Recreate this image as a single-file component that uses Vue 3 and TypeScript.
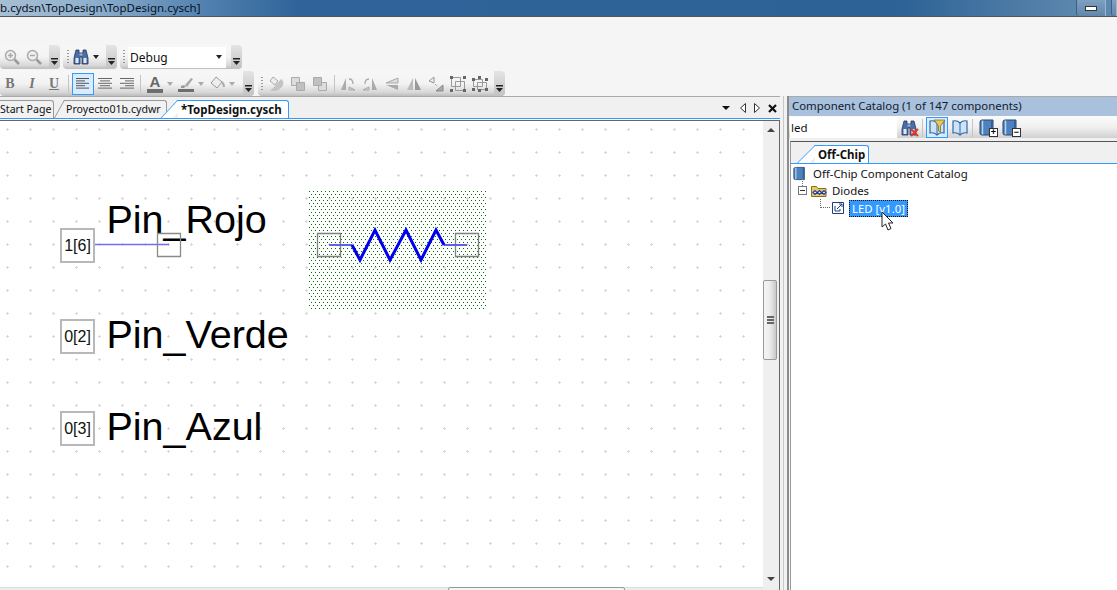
<script setup lang="ts">
const pins = [
  { id: 'rojo', value: '1[6]', label: 'Pin_Rojo' },
  { id: 'verde', value: '0[2]', label: 'Pin_Verde' },
  { id: 'azul', value: '0[3]', label: 'Pin_Azul' }
];

const alignLines = {
  left: [[1, 13], [1, 9], [1, 13], [1, 9], [1, 13]],
  center: [[1, 14], [3, 10], [1, 14], [3, 10], [1, 14]],
  right: [[1, 14], [6, 9], [1, 14], [6, 9], [1, 14]]
};
</script>

<template>
  <div class="window">
    <svg class="defs" width="0" height="0">
      <defs>
        <symbol id="binoc" viewBox="0 0 16 16">
          <path d="M3 1h3v3h4V1h3l2 8v6H9V8H7v7H1V9z" fill="#4a6ea8" stroke="#22365e" stroke-width=".8" />
          <path d="M2.500 9h3v5h-3zM10.500 9h3v5h-3z" fill="#dfe8f6" />
          <path d="M6.500 4.500h3v2h-3z" fill="#9fb4d6" />
        </symbol>
        <symbol id="book" viewBox="0 0 16 17">
          <path d="M3 1h11v15H3a2 2 0 0 1-2-2V3a2 2 0 0 1 2-2z" fill="#4f81bd" stroke="#26466f" />
          <path d="M3.500 1.500v14" stroke="#b9d2ee" stroke-width="1.500" />
          <path d="M12 2h1.500v13H12z" fill="#2f5f97" />
        </symbol>
        <symbol id="openbook" viewBox="0 0 18 17">
          <path d="M9 4C7 2 4 1.500 2 2v12c2-.5 5 0 7 2 2-2 5-2.500 7-2V2c-2-.5-5 0-7 2z" fill="#cfe2f6" stroke="#2f6aa8" stroke-width="1.200" />
          <path d="M9 4v12" stroke="#2f6aa8" />
        </symbol>
        <symbol id="grip" viewBox="0 0 7 8">
          <path d="M0 0h7v1.500H0z" fill="#222" />
          <path d="M0 3h7L3.500 7z" fill="#222" />
        </symbol>
      </defs>
    </svg>

    <div class="titlebar">
      <span class="title-text">b.cydsn\TopDesign\TopDesign.cysch]</span>
      <div class="winbtns">
        <span class="winbtn"><i></i></span>
        <span class="winbtn winbtn-next"></span>
      </div>
    </div>

    <div class="commands">
      <div class="row row-one">
        <div class="strip s-zoom">
          <svg class="ico16 m4" viewBox="0 0 16 16"><circle cx="6.500" cy="6.500" r="5" fill="#eee" stroke="#aaa" stroke-width="1.500" /><path d="M10.500 10.500l4.500 4.500" stroke="#999" stroke-width="2.500" /><path d="M4 6.500h5M6.500 4v5" stroke="#aaa" stroke-width="1.400" /></svg>
          <svg class="ico16 m7" viewBox="0 0 16 16"><circle cx="6.500" cy="6.500" r="5" fill="#eee" stroke="#aaa" stroke-width="1.500" /><path d="M10.500 10.500l4.500 4.500" stroke="#999" stroke-width="2.500" /><path d="M4 6.500h5" stroke="#aaa" stroke-width="1.400" /></svg>
          <span class="over"><svg class="gripico"><use href="#grip" /></svg></span>
        </div>
        <div class="strip s-find">
          <span class="dots"></span>
          <svg class="ico16 m3"><use href="#binoc" /></svg>
          <span class="caret c5"></span>
          <span class="over"><svg class="gripico"><use href="#grip" /></svg></span>
        </div>
        <div class="strip s-config">
          <span class="dots"></span>
          <div class="select"><span>Debug</span><span class="caret"></span></div>
          <span class="over"><svg class="gripico"><use href="#grip" /></svg></span>
        </div>
      </div>

      <div class="row row-two">
        <div class="strip s-format">
          <span class="fmt f-b">B</span>
          <span class="fmt f-i">I</span>
          <span class="fmt f-u">U</span>
          <span class="sep sep-a"></span>
          <span class="align on">
            <svg viewBox="0 0 16 11" width="16" height="11"><path v-for="(l, i) in alignLines.left" :key="i" :d="`M${l[0]} ${i * 2.4 + .5}h${l[1]}`" stroke="#555" /></svg>
          </span>
          <span class="align">
            <svg viewBox="0 0 16 11" width="16" height="11"><path v-for="(l, i) in alignLines.center" :key="i" :d="`M${l[0]} ${i * 2.4 + .5}h${l[1]}`" stroke="#666" /></svg>
          </span>
          <span class="align">
            <svg viewBox="0 0 16 11" width="16" height="11"><path v-for="(l, i) in alignLines.right" :key="i" :d="`M${l[0]} ${i * 2.4 + .5}h${l[1]}`" stroke="#666" /></svg>
          </span>
          <span class="sep sep-b"></span>
          <span class="color-a">A</span>
          <span class="caret gray c4"></span>
          <svg class="ico16 m5" viewBox="0 0 16 16"><path d="M7 9l6-7 2 1-6 8z" fill="#aaa" /><path d="M3 10c2-1 3-1 5 0l-2 2H3z" fill="#999" /><path d="M0 13h16v3H0z" fill="#6d6d6d" /></svg>
          <span class="caret gray c4"></span>
          <svg class="ico16 m5" viewBox="0 0 16 16"><path d="M7 1l6 5-5 6-6-5z" fill="#eee" stroke="#999" /><path d="M13 6c2 2 2 3 2 5" stroke="#aaa" stroke-width="2" fill="none" /><path d="M0 13h16v3H0z" fill="#ddd" /></svg>
          <span class="caret gray c4"></span>
          <span class="over"><svg class="gripico"><use href="#grip" /></svg></span>
        </div>
        <div class="strip s-arrange">
          <span class="dots"></span>
          <svg class="ico16 ar1" viewBox="0 0 18 16"><path d="M5 1l5 4-3 4-5-4z" fill="#eee" stroke="#aaa" /><path d="M13 3c3 2 3 5 1 8l-5 4H2l5-5z" fill="#c4c4c4" /></svg>
          <svg class="ico16 ar2" viewBox="0 0 16 16"><path d="M1.500 1.500h8v8h-8z" fill="#ddd" stroke="#aaa" /><path d="M6.500 6.500h8v8h-8z" fill="#c0c0c0" stroke="#aaa" /></svg>
          <svg class="ico16 ar6" viewBox="0 0 16 16"><path d="M6.500 6.500h8v8h-8z" fill="#ddd" stroke="#aaa" /><path d="M1.500 1.500h8v8h-8z" fill="#c0c0c0" stroke="#aaa" /></svg>
          <span class="sep sep-c"></span>
          <svg class="ico16 ar3" viewBox="0 0 16 16"><path d="M1 14L6 2v12z" fill="#aaa" /><path d="M9 14v-3l6 3z" fill="#ccc" stroke="#aaa" /><path d="M9 3c3 0 4 2 4 5" fill="none" stroke="#aaa" stroke-width="1.300" /></svg>
          <svg class="ico16 ar6" viewBox="0 0 16 16"><path d="M15 14L10 2v12z" fill="#aaa" /><path d="M7 14v-3l-6 3z" fill="#ccc" stroke="#aaa" /><path d="M7 3C4 3 3 5 3 8" fill="none" stroke="#aaa" stroke-width="1.300" /></svg>
          <svg class="ico16 ar6" viewBox="0 0 16 16"><path d="M2 7l12-5v5z" fill="#ddd" stroke="#aaa" /><path d="M2 9l12 5V9z" fill="#aaa" /></svg>
          <svg class="ico16 ar6" viewBox="0 0 16 16"><path d="M7 2L1 14h6z" fill="#bbb" /><path d="M9 2l6 12H9z" fill="#999" /></svg>
          <svg class="ico16 ar6" viewBox="0 0 16 16"><path d="M1 5l5-4v6z" fill="#eee" stroke="#999" /><path d="M15 15H8l7-6z" fill="#aaa" stroke="#888" /><path d="M7 8l2 2" stroke="#888" stroke-dasharray="1 1" /></svg>
          <svg class="ico16 ar6" viewBox="0 0 16 16"><path d="M1.500 1.500h9v9h-9zM5.500 5.500h9v9h-9z" fill="none" stroke="#999" /><path d="M0 0h3v3H0zM13 0h3v3h-3zM0 13h3v3H0zM13 13h3v3h-3z" fill="#666" /></svg>
          <svg class="ico16 ar6" viewBox="0 0 16 16"><path d="M1.500 3.500h9v7h-9zM5.500 6.500h9v7h-9z" fill="none" stroke="#999" /><path d="M0 2h3v3H0zM13 2h3v3h-3zM0 12h3v3H0zM13 12h3v3h-3zM6 0h3v3H6zM6 13h3v3H6z" fill="#666" /></svg>
          <span class="over"><svg class="gripico"><use href="#grip" /></svg></span>
        </div>
      </div>
    </div>

    <div class="workspace">
      <section class="doc">
        <div class="tabbar">
          <span class="tab tab-start">Start Page</span>
          <span class="tab tab-proj">Proyecto01b.cydwr</span>
          <span class="tab tab-top">*TopDesign.cysch</span>
          <div class="tab-tools">
            <span class="tt-down"></span>
            <svg width="6" height="10" viewBox="0 0 6 10"><path d="M5.500 .5v9L.5 5z" fill="#fff" stroke="#333" /></svg>
            <svg width="6" height="10" viewBox="0 0 6 10"><path d="M.5 .5v9L5.500 5z" fill="#fff" stroke="#333" /></svg>
            <svg viewBox="0 0 9 9" width="9" height="9"><path d="M1 1l7 7M8 1L1 8" stroke="#111" stroke-width="2.200" /></svg>
          </div>
        </div>

        <div class="doc-body">
          <div class="canvas-col">
            <div class="canvas">
              <div class="pins">
                <div v-for="pin in pins" :key="pin.id" class="pin" :class="pin.id">
                  <span class="pin-box">{{ pin.value }}</span>
                  <span class="pin-label">{{ pin.label }}</span>
                </div>
              </div>

              <!-- wire + loose terminal on Pin_Rojo -->
              <svg class="wire" width="100" height="40" viewBox="0 0 100 40">
                <path d="M0 13.500h74" stroke="#6f6ff0" stroke-width="1.500" />
                <path d="M62.500 2.500h23v23h-23z" fill="none" stroke="#8a8a8a" stroke-width="1.300" />
              </svg>

              <!-- resistor, selected -->
              <svg class="resistor" width="178" height="118" viewBox="0 0 178 118">
                <defs>
                  <pattern id="hatch" width="4" height="6" patternUnits="userSpaceOnUse">
                    <rect x="0" y="0" width="1" height="1" fill="#006c00" />
                    <rect x="2" y="3" width="1" height="1" fill="#006c00" />
                  </pattern>
                </defs>
                <rect width="178" height="118" fill="url(#hatch)" />
                <path d="M8.500 42.500h23v23h-23zM146.500 42.500h23v23h-23z" fill="none" stroke="#808080" stroke-width="1.300" />
                <path d="M20 54h23M135 54h23" stroke="#6060e8" stroke-width="2" />
                <path d="M43 54l8 15 15-30 15 30 16-30 15 30 15-30 8 15" fill="none" stroke="#0000ee" stroke-width="3" />
              </svg>
            </div>
            <div class="hbar"><span class="hthumb"></span></div>
          </div>
          <div class="vbar">
            <span class="arrow-up"></span>
            <span class="vthumb"><i></i><i></i><i></i></span>
            <span class="arrow-down"></span>
          </div>
        </div>
      </section>

      <div class="splitter"></div>

      <aside class="catalog">
        <header class="cat-head">Component Catalog (1 of 147 components)</header>
        <div class="cat-tools">
          <div class="cat-search">led</div>
          <span class="cat-binoc">
            <svg class="ico16"><use href="#binoc" /></svg>
            <svg class="redx" viewBox="0 0 9 9" width="9" height="9"><path d="M1 1l7 7M8 1L1 8" stroke="#e0392b" stroke-width="2" /></svg>
          </span>
          <span class="sep sep-d"></span>
          <span class="filter-btn">
            <svg width="18" height="17" viewBox="0 0 18 17"><use href="#openbook" /><path d="M6 1h11l-4.500 6v6l-2-1V7z" fill="#e8c65a" stroke="#7a6420" stroke-width=".7" /></svg>
          </span>
          <svg class="ico-book" width="18" height="17"><use href="#openbook" /></svg>
          <span class="sep sep-e"></span>
          <span class="book-op">
            <svg width="16" height="17"><use href="#book" /></svg>
            <b class="op">+</b>
          </span>
          <span class="book-op">
            <svg width="16" height="17"><use href="#book" /></svg>
            <b class="op">−</b>
          </span>
        </div>
        <div class="cat-body">
          <div class="cat-tabs"><span class="cat-tab">Off-Chip</span></div>
          <div class="tree">
            <div class="node n-root">
              <svg width="13" height="15"><use href="#book" /></svg>
              <span>Off-Chip Component Catalog</span>
            </div>
            <div class="node n-folder">
              <span class="expander"></span>
              <svg width="16" height="12" viewBox="0 0 16 12"><path d="M.5 1.500h5l1.500 2h8v8H.5z" fill="#e8c766" stroke="#8a6d1e" /><path d="M2 7.500l2-2 2 2-2 2zM6.500 7.500l2-2 2 2-2 2zM11 7.500l2-2 2 2-2 2z" fill="#fff" stroke="#1f3f9e" stroke-width="1.200" /></svg>
              <span>Diodes</span>
            </div>
            <div class="node n-leaf">
              <span class="branch"></span>
              <svg width="12" height="12" viewBox="0 0 12 12"><path d="M.5.500h11v11H.5z" fill="#fff" stroke="#1f3f78" /><path d="M3 4v5h5V7" fill="none" stroke="#1f3f78" /><path d="M5 7l5-5M7 2h3v3" fill="none" stroke="#1f3f78" /></svg>
              <span class="leaf-label">LED [v1.0]</span>
            </div>
          </div>
          <svg class="cursor" width="14" height="20" viewBox="0 0 14 20"><path d="M1 1v15l3.500-3 2.500 6 3-1.500-2.500-5.500H12z" fill="#fff" stroke="#222" /></svg>
        </div>
      </aside>
    </div>
  </div>
</template>

<style scoped>
.window {
  width: 1117px;
  height: 590px;
  overflow: hidden;
  display: flex;
  flex-direction: column;
  background: #f5f5f5;
  font-family: "Noto Sans", "Liberation Sans", sans-serif;
  font-size: 11.5px;
  color: #111;
}
.defs { position: absolute; }

.titlebar {
  height: 17px;
  flex: none;
  box-sizing: border-box;
  display: flex;
  align-items: center;
  justify-content: space-between;
  border-bottom: 1px solid #555;
  background: linear-gradient(90deg, #a8bfd4 0, #8fb0cd 90px, #4f7fae 210px, #2f6399 300px, #2d6296 900px, #5d88ae 1080px);
}
.title-text { font-size: 11.500px; color: #06121f; line-height: 16px; }
.winbtns { display: flex; align-items: stretch; height: 16px; }
.winbtn {
  width: 28px;
  margin-right: 5px;
  display: flex;
  align-items: center;
  justify-content: center;
  background: linear-gradient(#7ea0c0, #5f87ad);
  border-left: 1px solid #3d5f82;
  border-right: 1px solid #9db7cf;
  border-radius: 0 0 0 3px;
}
.winbtn i { width: 10px; height: 3px; background: #fff; border: 1px solid #333; }
.winbtn-next { width: 4px; margin-right: 0; }

.commands {
  height: 79px;
  flex: none;
  padding-top: 28px;
  box-sizing: border-box;
  display: flex;
  flex-direction: column;
  gap: 2px;
}
.row { display: flex; height: 24px; }
.row-two { height: 25px; }
.strip {
  display: flex;
  align-items: center;
  height: 100%;
  position: relative;
  box-sizing: border-box;
  border-radius: 4px;
  background: linear-gradient(#f7f7f7 0, #f3f3f3 50%, #d8d8d8 85%, #bdbdbd 100%);
}
.s-zoom { width: 60px; margin-right: 3px; }
.s-find { width: 54px; margin-right: 3px; padding-left: 4px; }
.s-config { width: 122px; padding-left: 3px; }
.s-format { width: 254px; margin-right: 4px; }
.s-arrange { width: 247px; padding-left: 3px; }
.over {
  position: absolute;
  right: 0;
  top: 0;
  bottom: 0;
  width: 11px;
  border-radius: 0 4px 4px 0;
  background: linear-gradient(#e4e4e4, #c2c2c2);
}
.gripico { position: absolute; left: 2px; bottom: 3px; width: 7px; height: 8px; }
.dots {
  width: 2px;
  height: 14px;
  flex: none;
  background: repeating-linear-gradient(#999 0 1px, transparent 1px 3px);
}
.ico16 { width: 16px; height: 16px; flex: none; }
.m4 { margin-left: 4px; }
.m7 { margin-left: 6px; }
.m3 { margin-left: 4px; }
.m5 { margin-left: 5px; }
.caret {
  width: 0;
  height: 0;
  flex: none;
  border: 3.500px solid transparent;
  border-top: 4px solid #222;
  border-bottom: 0;
}
.caret.gray { border-top-color: #aaa; }
.c5 { margin-left: 4px; }
.c4 { margin-left: 4px; }
.select {
  width: 98px;
  height: 21px;
  margin-left: 3px;
  padding: 0 4px 0 2px;
  box-sizing: border-box;
  display: flex;
  align-items: center;
  justify-content: space-between;
  background: #fff;
  font-size: 12px;
}

.fmt {
  width: 12px;
  flex: none;
  text-align: center;
  font-family: "Liberation Serif", serif;
  font-size: 14px;
  font-weight: bold;
  color: #777;
}
.f-b { margin-left: 4px; }
.f-i { margin-left: 10px; font-style: italic; }
.f-u { margin-left: 10px; text-decoration: underline; }
.sep { width: 1px; height: 18px; flex: none; background: #c4c4c4; }
.sep-a { margin-left: 8px; }
.sep-b { margin-left: 2px; }
.sep-c { margin-left: 6px; }
.align {
  width: 22px;
  height: 22px;
  flex: none;
  box-sizing: border-box;
  display: flex;
  align-items: center;
  justify-content: center;
}
.sep-a + .align { margin-left: 3px; }
.align.on { background: #d9ecfd; border: 1px solid #3399ff; }
.color-a {
  width: 16px;
  margin-left: 6px;
  flex: none;
  height: 18px;
  line-height: 14px;
  box-sizing: border-box;
  text-align: center;
  font-family: "Liberation Sans", sans-serif;
  font-size: 15px;
  font-weight: bold;
  color: #666;
  border-bottom: 4px solid #6d6d6d;
}
.ar1 { width: 18px; margin-left: 5px; }
.ar2 { margin-left: 4px; }
.ar3 { margin-left: 5px; }
.ar6 { margin-left: 6px; }

.workspace { flex: 1; display: flex; min-height: 0; }
.doc { width: 780px; flex: none; display: flex; flex-direction: column; border-top: 1px solid #aaa; }

.tabbar {
  height: 22px;
  flex: none;
  display: flex;
  align-items: flex-end;
  box-sizing: border-box;
  border-bottom: 1px solid #3399ff;
  position: relative;
  background: #f0f0f0;
  margin-bottom: 1px;
}
.tab {
  position: relative;
  isolation: isolate;
  height: 18px;
  line-height: 17px;
  box-sizing: border-box;
  background: #f2f2f2;
  border: 1px solid #999;
  border-left: 0;
  border-bottom: 0;
  border-radius: 0 3px 0 0;
  font-size: 10.600px;
  white-space: nowrap;
}
.tab-start { width: 54px; text-align: right; padding-right: 6px; }
.tab-proj { width: 103px; margin-left: 10px; padding-left: 2px; }
.tab-top {
  width: 111px;
  margin-left: 11px;
  padding-left: 3px;
  background: #fff;
  font-size: 11.500px;
  font-weight: bold;
  border-color: #3399ff;
}
.tab-proj::before, .tab-top::before {
  content: "";
  position: absolute;
  top: -1px;
  bottom: 0;
  background: inherit;
  border-left: 1px solid #999;
  border-top: 1px solid #999;
  box-sizing: border-box;
  z-index: -1;
}
.tab-proj::before { left: -5px; width: 8px; transform: skewX(-29deg); }
.tab-top::before { left: -9px; width: 12px; transform: skewX(-43deg); border-color: #3399ff; }
.tab-tools {
  position: absolute;
  right: 3px;
  top: 6px;
  display: flex;
  align-items: center;
  gap: 8px;
}
.tt-down { width: 0; height: 0; margin-right: 2px; border: 4px solid transparent; border-top: 4px solid #111; border-bottom: 0; }

.doc-body { flex: 1; display: flex; min-height: 0; border-top: 1px solid #666; }
.canvas-col { flex: 1; display: flex; flex-direction: column; min-width: 0; }
.canvas {
  flex: 1;
  position: relative;
  overflow: hidden;
  background-color: #fff;
  background-image: radial-gradient(circle, #d8d8d8 0, #d8d8d8 1px, transparent 1.300px);
  background-size: 23px 23px;
  background-position: -4px -3px;
}
.hbar { height: 3px; flex: none; box-sizing: border-box; background: #ececec; position: relative; border-top: 1px solid #ddd; }
.hthumb {
  position: absolute;
  left: 448px;
  top: -1px;
  width: 177px;
  height: 5px;
  box-sizing: border-box;
  background: #f5f5f5;
  border: 1px solid #999;
  border-radius: 2px 2px 0 0;
}
.vbar {
  width: 16px;
  flex: none;
  position: relative;
  background: #efefef;
  border-right: 1px solid #666;
  box-sizing: content-box;
}
.arrow-up, .arrow-down { position: absolute; left: 4px; width: 0; height: 0; border: 4px solid transparent; }
.arrow-up { top: 7px; border-bottom: 4px solid #444; border-top: 0; }
.arrow-down { bottom: 9px; border-top: 4px solid #444; border-bottom: 0; }
.vthumb {
  position: absolute;
  left: 0;
  top: 159px;
  width: 14px;
  height: 80px;
  box-sizing: border-box;
  display: flex;
  flex-direction: column;
  justify-content: center;
  align-items: center;
  gap: 1px;
  border: 1px solid #999;
  border-radius: 2px;
  background: linear-gradient(90deg, #f4f4f4 0, #ececec 50%, #c8c8c8 100%);
}
.vthumb i { width: 7px; height: 2px; background: #666; }

/* free canvas: schematic parts sit at their drawn position */
.pins { position: absolute; left: 60px; top: 107px; display: flex; flex-direction: column; gap: 56px; }
.pin { display: flex; align-items: center; gap: 12px; height: 35px; position: relative; font-family: "Liberation Sans", Arial, sans-serif; }
.pin-box {
  width: 35px;
  height: 35px;
  box-sizing: border-box;
  border: 2px solid #b8b8b8;
  background: #fff;
  font-size: 16px;
  line-height: 31px;
  text-align: center;
  color: #111;
}
.pin-label { font-size: 39.500px; line-height: 44px; color: #000; white-space: nowrap; margin-left: -.5px; }
.pin.rojo .pin-label { margin-top: -53px; }
.pin.verde .pin-label { margin-top: -6px; }
.pin.azul { margin-top: 1px; }
.pin.azul .pin-label { margin-top: -6px; }
.wire { position: absolute; left: 95px; top: 110px; overflow: visible; }
.resistor { position: absolute; left: 309px; top: 70px; }

.splitter {
  width: 9px;
  flex: none;
  box-sizing: border-box;
  background: linear-gradient(90deg, transparent 3px, #c8c8c8 3px, #c8c8c8 4px, transparent 4px) #f2f2f2;
  border-right: 2px solid #8c8c8c;
}

.catalog { flex: 1; display: flex; flex-direction: column; min-width: 0; border-top: 1px solid #aaa; }
.cat-head {
  height: 19px;
  flex: none;
  line-height: 18px;
  padding-left: 3px;
  background: #a9c1dc;
  font-size: 11.400px;
  color: #10202f;
}
.cat-tools {
  height: 25px;
  flex: none;
  box-sizing: border-box;
  display: flex;
  align-items: center;
  background: linear-gradient(#fbfbfb, #f0f0f0 45%, #cfcfcf 90%, #f0f0f0 90%);
  padding: 0 0 2px 1px;
}
.cat-search {
  width: 107px;
  height: 21px;
  line-height: 21px;
  flex: none;
  padding-left: 1px;
  box-sizing: border-box;
  background: #fff;
  font-size: 11.5px;
}
.cat-binoc { position: relative; width: 17px; height: 16px; margin-left: 4px; flex: none; }
.redx { position: absolute; right: -1px; bottom: -1px; }
.sep-d { margin-left: 4px; }
.sep-e { margin-left: 3px; }
.filter-btn {
  width: 22px;
  height: 21px;
  margin-left: 3px;
  flex: none;
  box-sizing: border-box;
  display: flex;
  align-items: center;
  justify-content: center;
  background: #d9ecfd;
  border: 1px solid #3399ff;
}
.ico-book { margin-left: 3px; flex: none; }
.book-op { position: relative; width: 17px; height: 17px; margin-left: 6px; flex: none; }
.op {
  position: absolute;
  right: -2px;
  bottom: -1px;
  width: 9px;
  height: 9px;
  box-sizing: border-box;
  border: 1px solid #333;
  background: #fff;
  font: bold 9px/7px "Liberation Sans", sans-serif;
  text-align: center;
  color: #000;
}

.cat-body {
  flex: 1;
  position: relative;
  background: #fff;
  border-left: 1px solid #999;
  border-top: 1px solid #555;
  margin-left: 1px;
  min-height: 0;
}
.cat-tabs {
  height: 22px;
  box-sizing: border-box;
  padding-left: 24px;
  display: flex;
  align-items: flex-end;
  background: #f0f0f0;
  border-bottom: 1px solid #3399ff;
}
.cat-tab {
  position: relative;
  isolation: isolate;
  width: 54px;
  height: 18px;
  line-height: 17px;
  box-sizing: border-box;
  padding-left: 3px;
  background: #fff;
  border: 1px solid #3399ff;
  border-left: 0;
  border-bottom: 0;
  border-radius: 0 3px 0 0;
  font-weight: bold;
  font-size: 11.5px;
}
.cat-tab::before {
  content: "";
  position: absolute;
  left: -9px;
  top: -1px;
  bottom: 0;
  width: 12px;
  background: #fff;
  box-sizing: border-box;
  border-left: 1px solid #3399ff;
  border-top: 1px solid #3399ff;
  transform: skewX(-45deg);
  z-index: -1;
}
.tree { padding-top: 1px; }
.node { position: relative; display: flex; align-items: center; white-space: nowrap; font-size: 11.400px; }
.n-root { height: 17px; padding-left: 2px; gap: 7px; }
.n-folder { height: 17px; padding-left: 7px; }
.n-folder svg { margin-left: 4px; margin-right: 5px; }
.expander {
  position: relative;
  width: 9px;
  height: 9px;
  box-sizing: border-box;
  border: 1px solid #777;
  background: linear-gradient(90deg, transparent 1px, #333 1px, #333 6px, transparent 6px) center / 100% 1px no-repeat #fff;
}
.expander::before {
  content: "";
  position: absolute;
  left: 3px;
  top: -9px;
  height: 8px;
  border-left: 1px dotted #777;
}
.n-leaf { height: 18px; padding-left: 29px; }
.branch {
  width: 10px;
  height: 9px;
  margin-top: -9px;
  flex: none;
  margin-right: 2px;
  box-sizing: border-box;
  border-left: 1px dotted #666;
  border-bottom: 1px dotted #666;
}
.leaf-label {
  margin-left: 5px;
  height: 17px;
  line-height: 15px;
  padding: 0 2px;
  box-sizing: border-box;
  background: #3399ff;
  color: #fff;
  border: 1px dotted #111;
}
.cursor { position: absolute; left: 90px; top: 69px; }
</style>

<style>
html, body { background: #f5f5f5; overflow: hidden; }
</style>
